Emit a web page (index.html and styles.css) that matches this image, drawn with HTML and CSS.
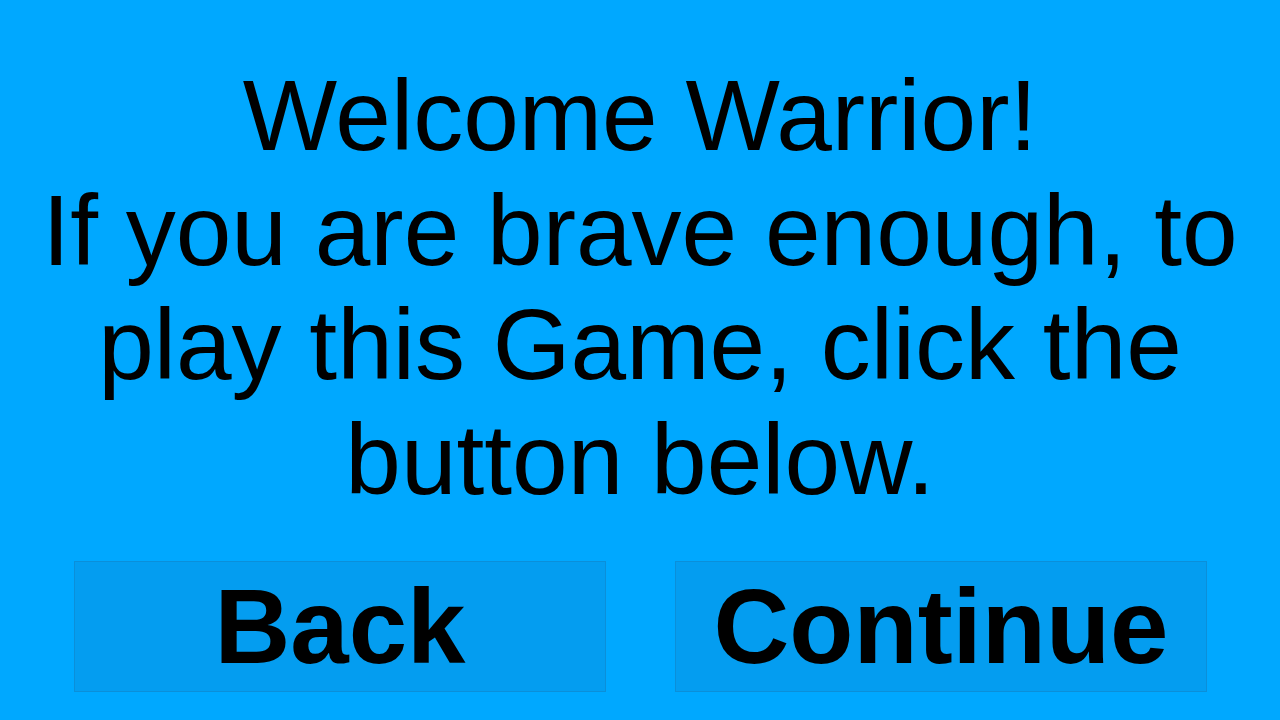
FILE: index.html
```html
<!DOCTYPE html>
<html>
<head>
<meta charset="utf-8">
<link rel="stylesheet" href="styles.css">
</head>
<body>
<main class="screen">
  <div class="message">
    <p class="line">Welcome Warrior!</p>
    <p class="line">If you are brave enough, to play this Game, click the button below.</p>
  </div>
  <div class="actions">
    <button class="btn">Back</button>
    <button class="btn">Continue</button>
  </div>
</main>
</body>
</html>
```
FILE: styles.css
```css
html, body {
  margin: 0;
  padding: 0;
}
body {
  background: #00a8ff;
  width: 1280px;
  height: 720px;
  overflow: hidden;
  font-family: "Liberation Sans", Arial, sans-serif;
  color: #000;
}
.screen {
  display: flex;
  flex-direction: column;
  align-items: center;
  padding-top: 58px;
}
.message {
  width: 1280px;
  text-align: center;
  font-size: 100px;
  line-height: 114.5px;
}
.line {
  margin: 0;
}
.actions {
  display: flex;
  gap: 69px;
  margin-top: 45px;
  padding-left: 74px;
  padding-right: 73px;
  width: 1280px;
  box-sizing: border-box;
}
.btn {
  flex: 1;
  height: 131px;
  background: #049df0;
  border: 1px solid #0b8fd9;
  font-family: "Liberation Sans", Arial, sans-serif;
  font-weight: bold;
  font-size: 105px;
  color: #000;
  padding: 0;
  display: flex;
  align-items: center;
  justify-content: center;
}
```
